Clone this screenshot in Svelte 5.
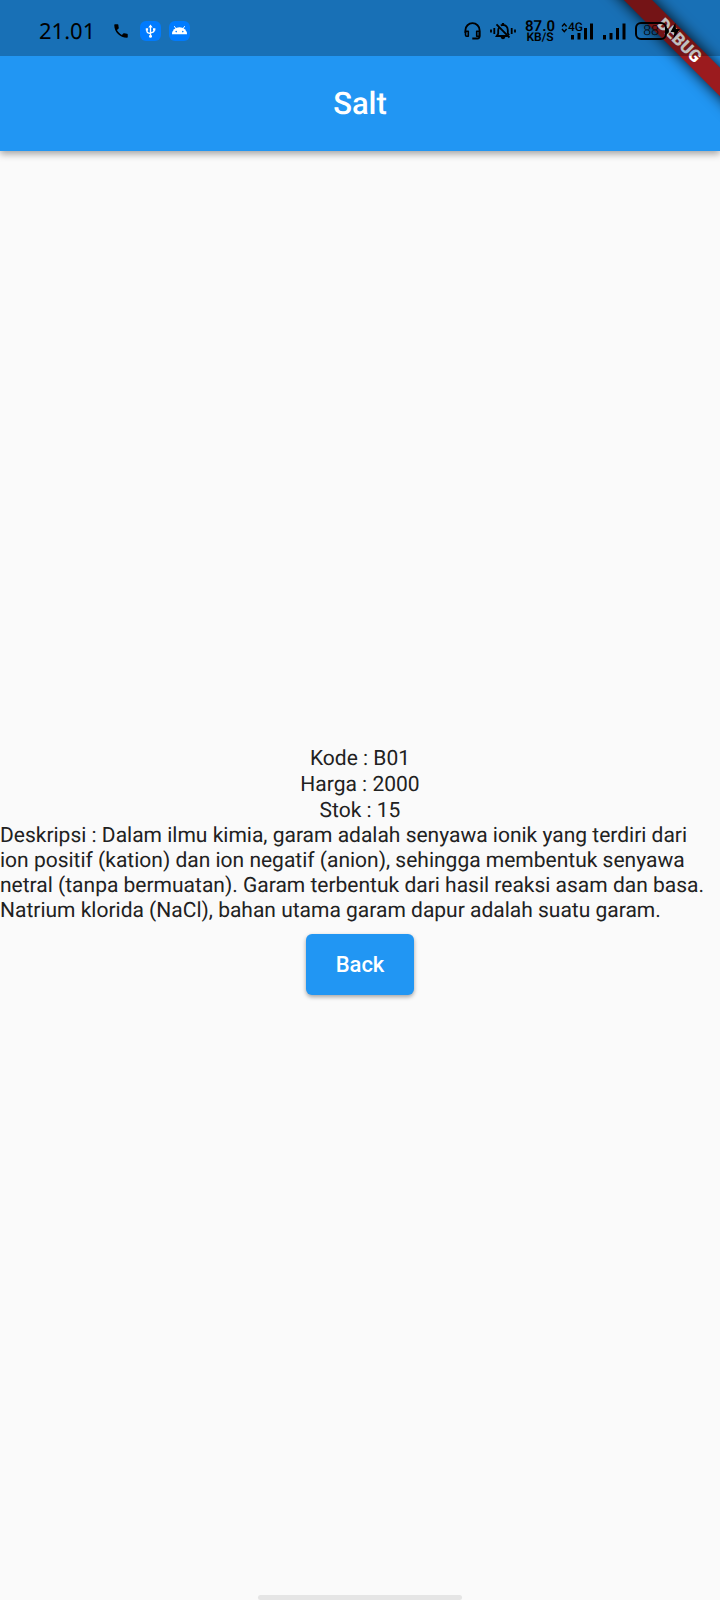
<script>
  const title = 'Salt';
  const details = [
    ['Kode', 'B01'],
    ['Harga', '2000'],
    ['Stok', '15']
  ];
  const description =
    'Dalam ilmu kimia, garam adalah senyawa ionik yang terdiri dari ion positif (kation) dan ion negatif (anion), sehingga membentuk senyawa netral (tanpa bermuatan). Garam terbentuk dari hasil reaksi asam dan basa. Natrium klorida (NaCl), bahan utama garam dapur adalah suatu garam.';

  function goBack() {
    history.back();
  }
</script>

<div class="screen">
  <header class="top">
    <div class="corner" aria-hidden="true"><div class="ribbon">DEBUG</div></div>

    <div class="status">
      <div class="group left">
        <time class="clock">21.01</time>
        <svg class="call" width="18" height="18" viewBox="0 0 24 24">
          <path d="M20 15.5c-1.2 0-2.5-.2-3.6-.6-.3-.1-.7 0-1 .2l-2.2 2.2c-2.8-1.400-5.100-3.800-6.600-6.600l2.200-2.200c.3-.3.4-.7.2-1C8.700 6.400 8.500 5.200 8.500 4c0-.6-.4-1-1-1H4c-.6 0-1 .4-1 1 0 9.400 7.600 17 17 17 .6 0 1-.4 1-1v-3.500c0-.6-.4-1-1-1z" />
        </svg>
        <svg width="21" height="20" viewBox="0 0 21 20">
          <rect width="21" height="20" rx="6" fill="#007bff" />
          <g fill="none" stroke="#fff" stroke-width="1.300">
            <path d="M10.500 5v10M6.900 8.300v1.900q0 1.800 3.600 2.400M14.200 8.300v1.300q0 1.800-3.700 2.400" />
          </g>
          <path fill="#fff" d="M10.500 3.600l2.200 3H8.300zM5.800 7.200h2.300v2.200H5.800zM13 7.200h2.400v2.200H13z" />
          <circle cx="10.500" cy="15.200" r="1.500" fill="#fff" />
        </svg>
        <svg width="21" height="20" viewBox="0 0 21 20">
          <rect width="21" height="20" rx="6" fill="#007bff" />
          <path fill="#fff" d="M3 13.200a7.500 7 0 0 1 15 0z" />
          <path stroke="#fff" stroke-width="1" d="M5.300 5.200l2 3M15.700 5.200l-2 3" />
          <circle cx="7.200" cy="10.600" r=".8" fill="#007bff" />
          <circle cx="13.800" cy="10.600" r=".8" fill="#007bff" />
        </svg>
      </div>

      <div class="group right">
        <svg width="17" height="18" viewBox="0 0 17 18">
          <path fill="none" stroke="#000" stroke-width="1.800" d="M1.400 11V8.200a7.100 7 0 0 1 14.200 0v6.100q0 2.200-2.200 2.200H8.300" />
          <path fill="none" stroke="#000" stroke-width="1.600" stroke-linejoin="round" d="M1.500 9.300h2.800v5H2.700q-1.200 0-1.200-1.200zM15.500 9.300h-2.800v5h2.800z" />
        </svg>
        <svg width="26" height="18" viewBox="0 0 26 18">
          <g fill="none" stroke="#000" stroke-width="1.800">
            <path d="M1 7.500v3M4.300 6v6M21.700 6v6M25 7.500v3" />
            <path d="M9.300 5.300q-1.100 1.200-1.100 3v3.500L6.700 14h11M10.800 3.600q1-.7 2.200-.7 4.500.4 4.800 5.200v3.200l1.300 1.900" />
            <path d="M6.500 2.300l13 13.200" />
          </g>
          <path d="M11.900 1h2.200v2h-2.200zM10.600 15h4.800q-.6 2.200-2.400 2.200T10.600 15z" />
        </svg>
        <div class="speed"><span class="rate">87.0</span><span class="unit">KB/S</span></div>
        <div class="cell">
          <svg width="33" height="18" viewBox="0 0 33 18">
            <path fill="none" stroke="#000" stroke-width="1.400" d="M1 4.500l2.300-2.600 2.300 2.600M1 7l2.300 2.600L5.600 7" />
            <path d="M10 13h3v4.500h-3zM16.500 11h3v6.500h-3zM23 6h3v11.500h-3zM29 1.500h3v16h-3z" />
          </svg>
          <span class="net">4G</span>
        </div>
        <svg width="23" height="18" viewBox="0 0 23 18">
          <path d="M0 13h3v4.500H0zM6.500 11h3v6.500h-3zM13 6h3v11.500h-3zM19.500 1.500h3v16h-3z" />
        </svg>
        <div class="power">
          <span class="battery">88</span>
          <svg width="14" height="18" viewBox="0 0 14 18">
            <path d="M0 6q2 .4 2 3t-2 3zM8.300 1L3.500 10h4l-1.300 7L13 7H9z" />
          </svg>
        </div>
      </div>
    </div>

    <h1>{title}</h1>
  </header>

  <main>
    {#each details as [label, value]}
      <p class="detail">{label} : {value}</p>
    {/each}
    <p class="description">Deskripsi : {description}</p>
    <button type="button" onclick={goBack}>Back</button>
  </main>

  <div class="home"></div>
</div>

<style>
  :global(body) {
    margin: 0;
    background: #fafafa;
  }

  .screen {
    position: relative;
    display: flex;
    flex-direction: column;
    min-height: 100vh;
    background: #fafafa;
    color: #212121;
    font-family: Roboto, 'Liberation Sans', sans-serif;
    text-rendering: geometricPrecision;
  }

  .top {
    position: relative;
    background: #2196f3;
    box-shadow: 0 3px 7px rgba(0, 0, 0, 0.35);
  }

  .corner {
    position: absolute;
    inset: 0;
    overflow: hidden;
  }

  .ribbon {
    position: absolute;
    top: 31px;
    right: -59px;
    width: 200px;
    height: 20px;
    transform: rotate(45deg);
    background: #9b1b1e;
    box-shadow: 0 0 14px 1px rgba(0, 0, 0, 0.8);
    color: #fff;
    font-size: 17px;
    font-weight: 900;
    line-height: 20px;
    text-align: center;
  }

  .status {
    position: relative;
    display: flex;
    align-items: center;
    justify-content: space-between;
    height: 56px;
    padding: 6px 39px 0;
    box-sizing: border-box;
    background: rgba(0, 0, 0, 0.25);
    color: #000;
  }

  .group {
    display: flex;
    align-items: center;
    gap: 9px;
  }

  .left {
    gap: 8px;
  }

  .call {
    margin: 0 2px 0 9px;
  }

  .clock {
    font-family: 'Noto Sans', sans-serif;
    font-size: 22px;
    line-height: 24px;
  }

  .speed {
    display: flex;
    flex-direction: column;
    align-items: center;
    font-weight: 600;
  }

  .rate {
    font-size: 15px;
    line-height: 12px;
  }

  .unit {
    font-size: 12px;
    line-height: 10px;
  }

  .cell {
    position: relative;
    display: flex;
    margin-left: -3px;
  }

  .net {
    position: absolute;
    top: 0;
    left: 7px;
    font-size: 12px;
    font-weight: 500;
    line-height: 10px;
  }

  .power {
    display: flex;
    align-items: center;
  }

  .battery {
    box-sizing: border-box;
    width: 32px;
    height: 18px;
    border: 2px solid #000;
    border-radius: 6px;
    font-size: 14px;
    font-weight: 300;
    line-height: 14px;
    text-align: center;
  }

  h1 {
    margin: 0;
    font-size: 31px;
    font-weight: 500;
    line-height: 95px;
    text-align: center;
    color: #fff;
  }

  main {
    flex: 1;
    display: flex;
    flex-direction: column;
    align-items: center;
    justify-content: center;
  }

  p {
    margin: 0;
    font-size: 21px;
  }

  .detail {
    line-height: 26px;
  }

  .description {
    line-height: 25px;
  }

  button {
    margin: 10px 0;
    padding: 0 30px;
    border: 0;
    border-radius: 6px;
    background: #2196f3;
    box-shadow: 0 2px 4px rgba(0, 0, 0, 0.35);
    color: #fff;
    font-family: inherit;
    font-size: 22px;
    font-weight: 500;
    line-height: 61px;
  }

  .home {
    position: absolute;
    bottom: 0;
    left: 50%;
    width: 204px;
    height: 5px;
    transform: translateX(-50%);
    border-radius: 3px;
    background: #e5e5e5;
  }
</style>
